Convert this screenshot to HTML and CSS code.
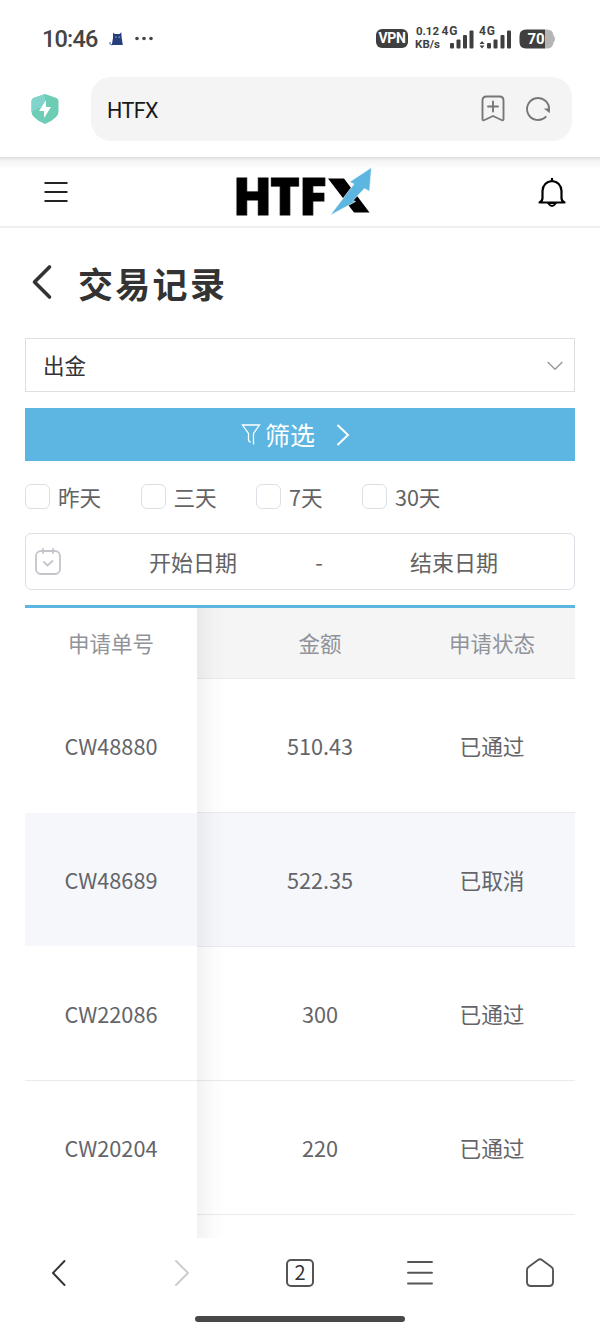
FILE: index.html
```html
<!DOCTYPE html>
<html lang="zh-CN">
<head>
<meta charset="utf-8">
<title>HTFX</title>
<link rel="stylesheet" href="styles.css">
</head>
<body>
<div class="status">
  <span class="time">10:46</span>
  <svg class="cat" width="15" height="14" viewBox="0 0 15 14"><path d="M4 .5l1.500 1.500h5L12.200.300l.5 5.700 1.100 7H2.800L4 6z" fill="#243f7c"/><path d="M4 12.500C1 13.500.2 11 1.500 10" fill="none" stroke="#243f7c"/><circle cx="7" cy="5" r=".6" fill="#fff"/><circle cx="10.200" cy="5" r=".6" fill="#fff"/></svg>
  <svg class="dots" width="20" height="5" viewBox="0 0 20 5" fill="#444"><circle cx="3" cy="2.500" r="1.800"/><circle cx="10" cy="2.500" r="1.800"/><circle cx="17" cy="2.500" r="1.800"/></svg>
  <span class="vpn">VPN</span>
  <span class="speed"><span>0.12</span><span>KB/s</span></span>
  <svg class="signals" width="72" height="24" viewBox="0 0 72 24" fill="#3f3f3f">
    <text x="0.500" y="9" textLength="16">4G</text>
    <rect x="9" y="17" width="4" height="5.500" rx="1"/><rect x="15.500" y="13.500" width="4" height="9" rx="1"/><rect x="22" y="9" width="4" height="13.500" rx="1"/><rect x="28.500" y="4.500" width="4" height="18" rx="1"/>
    <text x="38" y="9" textLength="16">4G</text>
    <path d="M38.500 18L41 15l2.500 3zM38.500 19.500L41 22.500l2.500-3z"/>
    <rect x="46" y="17" width="4" height="5.500" rx="1"/><rect x="52.500" y="13.500" width="4" height="9" rx="1"/><rect x="59.500" y="9" width="4" height="13.500" rx="1"/><rect x="66" y="4.500" width="4" height="18" rx="1"/>
  </svg>
  <svg class="battery" width="37" height="20" viewBox="0 0 37 20"><path d="M26 .5h2q6 0 6.500 6 1.500 1 1.500 3.500t-1.500 3.500q-.5 6-6.500 6h-2z" fill="#b5b5b5"/><path d="M7 .5h19v19H7Q.5 19.500.5 13V7Q.5.500 7 .5z" fill="#3f3f3f"/><text x="8.500" y="15" textLength="17" fill="#fff">70</text></svg>
</div>
<div class="address">
  <svg class="shield" width="28" height="32" viewBox="0 0 28 32"><path d="M14 1l11.500 4Q27.500 6 27.500 8v11q0 3-3 5.500Q20 29 14 31 8 29 3.500 24.500.5 22 .5 19V8q0-2 2-3z" fill="#6dcdb4"/><path d="M14 1L2.500 5Q.5 6 .5 8v11l13.500-7z" fill="#80d4cc"/><path d="M15 7L8 18h5v7l7-11h-5z" fill="#fff"/></svg>
  <div class="urlbar">
    <span class="url">HTFX</span>
    <svg width="24" height="28" viewBox="0 0 24 28" fill="none" stroke="#777" stroke-width="1.900" stroke-linecap="round" stroke-linejoin="round"><path d="M1.500 24V5.500q0-4 4-4h13q4 0 4 4V24q0 2-2 1L12 21 3.500 25q-2 1-2-1zM12 6.500v10M7 11.500h10"/></svg>
    <svg width="26" height="26" viewBox="0 0 26 26" fill="none" stroke="#777" stroke-width="1.900" stroke-linecap="round"><path d="M20.800 20.800A11 11 0 1 1 24 14"/><path d="M18.800 12.500h6v4.800z" fill="#777" stroke="none"/></svg>
  </div>
</div>
<header class="site">
  <svg class="burger" width="24" height="22" viewBox="0 0 24 22" stroke="#222" stroke-width="2"><path d="M.5 2h23M.5 11h23M.5 20h23"/></svg>
  <svg class="logo" width="138" height="50" viewBox="0 0 138 50"><g stroke="#000" stroke-width=".8"><text x="-3" y="48" textLength="39" lengthAdjust="spacingAndGlyphs">H</text><text x="34" y="48" textLength="30" lengthAdjust="spacingAndGlyphs">T</text><text x="63" y="48" textLength="28" lengthAdjust="spacingAndGlyphs">F</text></g><path d="M92 11.500h16L133.500 45.500H118z"/><path d="M94 48.500L118 17l-4.500-2L135.500.5l-2 24-5-3L117 33.500l2.500 1z" fill="#5cb6e0" stroke="#fff" stroke-width=".6"/></svg>
  <svg class="bell" width="28" height="32" viewBox="0 0 28 32" fill="none" stroke="#000" stroke-width="2.200" stroke-linejoin="round"><path d="M14 1v3M14 4q9 1 9.500 10v7q0 3 3 4.500H1.500q3-1.500 3-4.500v-7Q5 5 14 4z"/><path d="M10 26q4 6 8 0z" stroke-width="1.800"/></svg>
</header>
<main>
  <h1><svg width="22" height="34" viewBox="0 0 22 34" fill="none" stroke="#333" stroke-width="3.600" stroke-linecap="round" stroke-linejoin="round"><path d="M18.500 2L3.500 17l15 15"/></svg><span>交易记录</span></h1>
  <div class="select"><span>出金</span><svg width="16" height="10" viewBox="0 0 16 10" fill="none" stroke="#999" stroke-width="1.400"><path d="M.7 1L8 8.300 15.300 1"/></svg></div>
  <div class="filter"><svg class="funnel" width="20" height="21" viewBox="0 0 20 21" fill="none" stroke="#fff" stroke-width="1.300"><path d="M12.500 20.500V9.500L18.500 1H1.500l6 8.500v7l2 2"/></svg><span>筛选</span><svg class="next" width="14" height="24" viewBox="0 0 14 24" fill="none" stroke="#fff" stroke-width="2"><path d="M1.500 2L12 12 1.500 22"/></svg></div>
  <div class="ranges"><label><i></i><span>昨天</span></label><label><i></i><span>三天</span></label><label><i></i><span>7天</span></label><label><i></i><span>30天</span></label></div>
  <div class="dates"><svg width="26" height="28" viewBox="0 0 26 28" fill="none" stroke="#c4c5cb" stroke-width="1.800" stroke-linecap="round" stroke-linejoin="round"><rect x="1" y="3" width="24" height="23" rx="5"/><path d="M8 1v4M18 1v4M9 14l3.500 3.500L17.500 13"/></svg><span>开始日期</span><b>-</b><span>结束日期</span></div>
  <div class="table">
    <div class="row head"><span class="fixed">申请单号</span><span></span><span>金额</span><span>申请状态</span></div>
    <div class="row"><span class="fixed">CW48880</span><span></span><span>510.43</span><span>已通过</span></div>
    <div class="row hover"><span class="fixed">CW48689</span><span></span><span>522.35</span><span>已取消</span></div>
    <div class="row"><span class="fixed line">CW22086</span><span></span><span>300</span><span>已通过</span></div>
    <div class="row"><span class="fixed">CW20204</span><span></span><span>220</span><span>已通过</span></div>
    <div class="shade"></div>
  </div>
</main>
<nav>
  <svg width="28" height="30" viewBox="0 0 28 30" stroke="#333"><path d="M18.500 3L7 15l11.500 12"/></svg>
  <svg width="28" height="30" viewBox="0 0 28 30" stroke="#ccc"><path d="M10 3L22 15 10 27"/></svg>
  <span class="tabs">2</span>
  <svg width="28" height="30" viewBox="0 0 28 30" stroke="#555"><path d="M2 4h24M2 14.800h24M2 25.500h24"/></svg>
  <svg width="28" height="30" viewBox="0 0 28 30" stroke="#555"><path d="M1 12q0-2 1.500-3l9.500-7q2-1.500 4 0l9.500 7Q27 10 27 12v12q0 4-4 4H5q-4 0-4-4z"/></svg>
</nav>
<div class="grip"></div>
</body>
</html>
```
FILE: styles.css
```css
* { box-sizing: border-box; }
body { margin: 0; width: 600px; height: 1333px; overflow: hidden; background: #fff; color: #646569; font-family: "Noto Sans CJK SC", sans-serif; font-size: 22px; }
svg { display: block; flex: none; overflow: visible; }
.status { height: 77px; display: flex; align-items: center; padding: 0 45px 0 42px; color: #3f3f3f; }
.time { width: 67px; font: 500 23.5px/24px Roboto, sans-serif; letter-spacing: -.8px; color: #444; }
.cat { margin-right: 10px; }
.dots { margin-right: auto; }
.vpn { width: 32px; height: 19px; border-radius: 6px; background: #3f3f3f; color: #fff; font: 700 14px/19px Roboto, sans-serif; letter-spacing: -.3px; text-align: center; margin-right: 6px; }
.speed { width: 27px; display: flex; flex-direction: column; font: 700 11.5px/13px Roboto, sans-serif; text-align: center; white-space: nowrap; margin-top: -2px; }
.signals { margin: -1px 6px 0 0; font: 700 12px Roboto, sans-serif; }
.battery { font: 700 15px Roboto, sans-serif; margin-right: -1px; }
.address { height: 80px; display: flex; align-items: flex-start; padding-left: 31px; }
.shield { margin: 16px 32px 0 0; }
.urlbar { width: 481px; height: 64px; border-radius: 20px; background: #f4f4f4; display: flex; align-items: center; padding: 0 21px 0 16px; color: #191919; }
.url { margin: 3px auto 0 0; font: 400 21.5px/30px Roboto, sans-serif; letter-spacing: -.6px; }
.urlbar svg + svg { margin-left: 20px; }
.site { height: 71px; border-bottom: 2px solid #f0f0f0; background: linear-gradient(#dedede, #f5f5f5 4px, #fff 12px); display: flex; align-items: center; padding: 0 34px 0 44px; }
.logo { margin: 1px auto 0 168px; font: 800 51px "Open Sans", sans-serif; }
.bell { margin-top: 2px; }
main { padding: 0 25px; height: 1010px; }
h1 { margin: 0; height: 110px; padding: 2px 0 0 6px; display: flex; align-items: center; color: #333; font-size: 35px; font-weight: 700; letter-spacing: 2.3px; line-height: 50px; }
h1 svg { margin: -4px 25px 0 0; }
h1 span { margin-top: -2px; }
.select { height: 54px; border: 1px solid #dedfe0; display: flex; justify-content: space-between; align-items: center; padding: 0 11px 0 17px; color: #333; font-size: 21.500px; }
.select span { margin-top: -2px; }
.select svg { margin-top: 2px; }
.filter { margin-top: 16px; height: 53px; background: #5cb6e1; color: #fff; display: flex; align-items: center; font-size: 25px; padding-left: 216px; }
.filter span { margin-top: -1px; }
.funnel { margin: -1px 4px 0 0; }
.next { margin: 0 0 0 21px; }
.ranges { height: 72px; display: flex; gap: 39.3px; align-items: center; color: #636363; font-size: 21.6px; }
label { display: flex; align-items: center; gap: 8px; white-space: nowrap; }
label span { margin-top: -2px; }
label i { width: 25px; height: 25px; border: 1px solid #dcdfe6; border-radius: 6px; margin-top: -2px; }
.dates { height: 57px; border: 1px solid #dcdfe6; border-radius: 6px; display: grid; grid-template-columns: 26px 240px 36px 234px; padding-left: 9px; align-items: center; text-align: center; color: #636363; }
.dates span { padding-left: 24px; margin-top: -2px; }
.dates span:last-child { padding-left: 0; }
.dates b { font-weight: 400; margin-top: -2px; }
.dates svg { margin-top: 1px; }
.table { position: relative; margin-top: 15px; height: 633px; border-top: 3px solid #5cb6e1; overflow: hidden; }
.row { display: grid; grid-template-columns: 172px 37px 172px 172px; height: 134px; margin-right: -3px; text-align: center; line-height: 133px; border-bottom: 1px solid #e8eaf0; font-size: 21.700px; }
.fixed { height: 134px; background: #fff; }
.head { height: 71px; line-height: 70px; background: #f5f5f6; color: #909399; font-size: 21.5px; }
.head .fixed { height: 71px; }
.hover, .hover .fixed { background: #f5f7fb; }
.hover .fixed { height: 133px; box-shadow: 0 1px #fff; }
.fixed.line { height: 133px; }
.shade { position: absolute; left: 172px; top: 0; width: 32px; bottom: 0; background: linear-gradient(90deg, rgba(0,0,0,.05), rgba(0,0,0,.012) 55%, transparent); }
nav { height: 70px; padding: 0 46px; display: flex; justify-content: space-between; align-items: center; }
nav svg { fill: none; stroke-width: 1.9; stroke-linecap: round; stroke-linejoin: round; }
.tabs { width: 28px; height: 28px; border: 2px solid #555; border-radius: 5px; font-size: 20px; line-height: 22px; text-align: center; color: #333; }
.grip { width: 210px; height: 6px; border-radius: 3px; background: #484848; margin: 8px auto 0; }
```
